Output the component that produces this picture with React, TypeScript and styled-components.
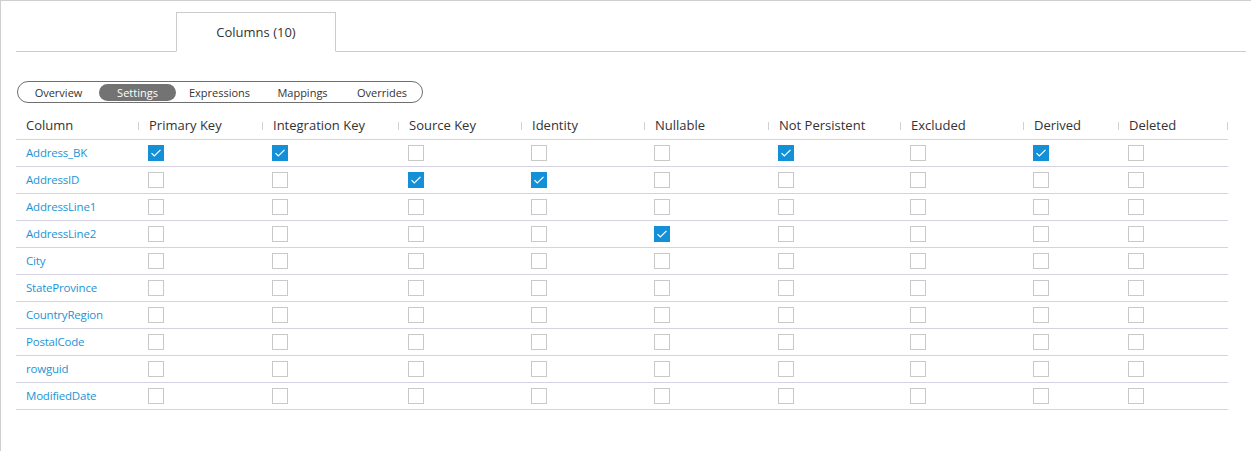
import React from "react";
import styled, { createGlobalStyle } from "styled-components";

const Global = createGlobalStyle`
  html, body { margin: 0; padding: 0; background: #fff; }
  body { font-family: "Segoe UI", "Open Sans", sans-serif; }
  * { box-sizing: border-box; }
`;

const COLS = "123px 124px 136px 123px 123px 124px 132px 123px 95px 109px";

const Frame = styled.div`
  width: 1251px;
  height: 451px;
  border-top: 1px solid #cfcfcf;
  border-left: 1px solid #cfcfcf;
  overflow: hidden;
`;

const TabStrip = styled.div`
  display: flex;
  margin: 11px 5px 0 15px;
  padding-left: 160px;
  border-bottom: 1px solid #cccccc;
`;

const Tab = styled.div`
  width: 160px;
  height: 40px;
  margin-bottom: -1px;
  border: 1px solid #cccccc;
  border-bottom-color: #ffffff;
  background: #fff;
  display: flex;
  align-items: center;
  justify-content: center;
  font-size: 13px;
  color: #333;
`;

const Segmented = styled.div`
  display: inline-flex;
  align-items: center;
  margin: 29px 0 0 16px;
  height: 22px;
  border: 1px solid #6f6f6f;
  border-radius: 11px;
`;

const Segment = styled.div<{ $active?: boolean; $w: number }>`
  width: ${(p) => p.$w}px;
  height: 17px;
  border-radius: 9px;
  display: flex;
  align-items: center;
  justify-content: center;
  font-size: 11px;
  color: ${(p) => (p.$active ? "#fff" : "#333")};
  background: ${(p) => (p.$active ? "#737373" : "transparent")};
`;

const Table = styled.div`
  margin: 10px 0 0 15px;
  width: 1212px;
`;

const Row = styled.div`
  display: grid;
  grid-template-columns: ${COLS};
  height: 27px;
  border-bottom: 1px solid #d5d3e2;
`;

const HeadCell = styled.div`
  position: relative;
  display: flex;
  align-items: center;
  padding: 0 0 2px 10px;
  font-size: 13px;
  color: #333;
  &::after {
    content: "";
    position: absolute;
    right: 0;
    top: 9px;
    width: 1px;
    height: 8px;
    background: #d2d2d2;
  }
`;

const NameCell = styled.div`
  display: flex;
  align-items: center;
  padding: 0 0 2px 10px;
  font-size: 11.5px;
  letter-spacing: -0.2px;
  color: #1c95d6;
`;

const BoxCell = styled.div`
  display: flex;
  align-items: center;
  padding-left: 9px;
`;

const Box = styled.span<{ $on?: boolean }>`
  width: 16px;
  height: 16px;
  display: inline-flex;
  align-items: center;
  justify-content: center;
  border: 1px solid ${(p) => (p.$on ? "#1490d8" : "#c9c9c9")};
  background: ${(p) => (p.$on ? "#1490d8" : "#fff")};
`;

const headers = [
  "Column",
  "Primary Key",
  "Integration Key",
  "Source Key",
  "Identity",
  "Nullable",
  "Not Persistent",
  "Excluded",
  "Derived",
  "Deleted",
];

const segments: [string, number][] = [
  ["Overview", 81],
  ["Settings", 77],
  ["Expressions", 87],
  ["Mappings", 79],
  ["Overrides", 80],
];

const rows: [string, number[]][] = [
  ["Address_BK", [0, 1, 5, 7]],
  ["AddressID", [2, 3]],
  ["AddressLine1", []],
  ["AddressLine2", [4]],
  ["City", []],
  ["StateProvince", []],
  ["CountryRegion", []],
  ["PostalCode", []],
  ["rowguid", []],
  ["ModifiedDate", []],
];

const Check = () => (
  <svg width="12" height="10" viewBox="0 0 12 10">
    <path d="M1.5 5.2 L4.3 8 L10.5 1.8" fill="none" stroke="#fff" strokeWidth="1.2" />
  </svg>
);

export default function App() {
  return (
    <>
      <Global />
      <Frame>
        <TabStrip>
          <Tab>Columns (10)</Tab>
        </TabStrip>
        <Segmented>
          {segments.map(([label, w]) => (
            <Segment key={label} $w={w} $active={label === "Settings"}>
              {label}
            </Segment>
          ))}
        </Segmented>
        <Table>
          <Row>
            {headers.map((h) => (
              <HeadCell key={h}>{h}</HeadCell>
            ))}
          </Row>
          {rows.map(([name, on]) => (
            <Row key={name}>
              <NameCell>{name}</NameCell>
              {Array.from({ length: 9 }).map((_, i) => (
                <BoxCell key={i}>
                  <Box $on={on.includes(i)}>{on.includes(i) && <Check />}</Box>
                </BoxCell>
              ))}
            </Row>
          ))}
        </Table>
      </Frame>
    </>
  );
}
